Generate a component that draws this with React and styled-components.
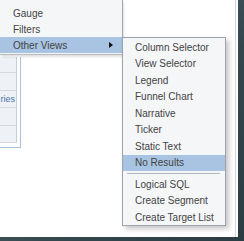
import React from "react";
import styled, { createGlobalStyle } from "styled-components";

const GlobalStyle = createGlobalStyle`
  html, body {
    margin: 0;
    padding: 0;
    background: #fff;
  }
  * {
    box-sizing: border-box;
  }
`;

const Frame = styled.div`
  width: 244px;
  height: 241px;
  display: flex;
  padding: 0 6px 4px 0;
  background: linear-gradient(135deg, #5d7179 0%, #34474f 60%, #2b3c43 100%);
  font-family: "Liberation Sans", Arial, sans-serif;
  font-size: 10px;
  color: #434343;
`;

const Screen = styled.div`
  flex: 1;
  display: flex;
  background: #fff;
  padding-right: 2px;
`;

const Page = styled.div`
  flex: 1;
  position: relative;
  border-right: 1px solid #d2d4d6;
  padding-top: 57px;
  overflow: hidden;
`;

const BgTable = styled.div`
  width: 21px;
  height: 91px;
  border-right: 1px solid #a9c2de;
  border-bottom: 1px solid #a9c2de;
`;

const BgRow = styled.div`
  width: 17px;
  height: ${(p) => p.$h}px;
  background: #eef1f6;
  border-right: 1px solid #cbcdd2;
  border-bottom: 1px solid #d6d8dc;
  display: flex;
  align-items: center;
  justify-content: flex-end;
  padding-right: 1px;
  white-space: nowrap;
  color: #4a74aa;
  font-size: 9px;
`;

const Menu = styled.div`
  position: absolute;
  left: 0;
  top: 0;
  width: 123px;
  padding-top: 5px;
  padding-bottom: 1px;
  background: #f5f6f8;
  border-right: 1px solid #a4a6ae;
  border-bottom: 1px solid #b8bac0;
  box-shadow: 1px 2px 2px rgba(0, 0, 0, 0.12);
`;

const SubMenu = styled.div`
  position: absolute;
  left: 122px;
  top: 37px;
  width: 104px;
  height: 189px;
  padding-top: 1px;
  background: #f5f6f8;
  border: 1px solid #9fa1aa;
  box-shadow: 3px 3px 5px rgba(0, 0, 0, 0.22);
`;

const Item = styled.div`
  height: ${(p) => p.$h}px;
  display: flex;
  align-items: center;
  justify-content: space-between;
  padding: 0 9px 0 ${(p) => p.$indent}px;
  white-space: nowrap;
  background: ${(p) => (p.$active ? "#a8c4e2" : "transparent")};
`;

const Arrow = styled.span`
  width: 0;
  height: 0;
  border-top: 3.5px solid transparent;
  border-bottom: 3.5px solid transparent;
  border-left: 4px solid #111;
`;

const Separator = styled.div`
  height: 1px;
  margin: 2px 5px 2px 4px;
  background: #b4b6bc;
`;

const mainItems = ["Gauge", "Filters", "Other Views"];

const viewItems = [
  "Column Selector",
  "View Selector",
  "Legend",
  "Funnel Chart",
  "Narrative",
  "Ticker",
  "Static Text",
  "No Results",
];

const extraItems = ["Logical SQL", "Create Segment", "Create Target List"];

const rowHeights = [16, 18, 17, 18, 17];

export default function App() {
  return (
    <>
      <GlobalStyle />
      <Frame>
        <Screen>
          <Page>
            <BgTable>
              {rowHeights.map((h, i) => (
                <BgRow key={i} $h={h}>
                  {i === 2 ? "ries" : ""}
                </BgRow>
              ))}
            </BgTable>

            <Menu>
              {mainItems.map((label) => (
                <Item
                  key={label}
                  $h={16}
                  $indent={13}
                  $active={label === "Other Views"}
                >
                  {label}
                  {label === "Other Views" && <Arrow />}
                </Item>
              ))}
            </Menu>

            <SubMenu>
              {viewItems.map((label) => (
                <Item
                  key={label}
                  $h={16.5}
                  $indent={12}
                  $active={label === "No Results"}
                >
                  {label}
                </Item>
              ))}
              <Separator />
              {extraItems.map((label) => (
                <Item key={label} $h={16.5} $indent={12}>
                  {label}
                </Item>
              ))}
            </SubMenu>
          </Page>
        </Screen>
      </Frame>
    </>
  );
}
